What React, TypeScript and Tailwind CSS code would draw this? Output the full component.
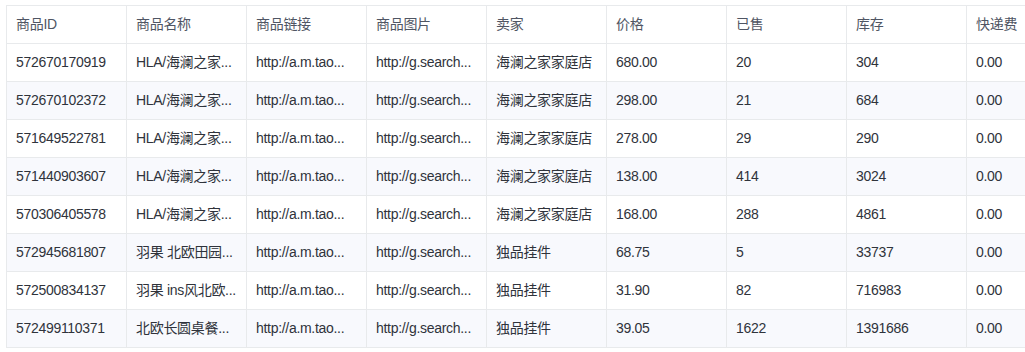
const columns = ["商品ID", "商品名称", "商品链接", "商品图片", "卖家", "价格", "已售", "库存", "快递费"];

const rows = [
  ["572670170919", "HLA/海澜之家...", "http://a.m.tao...", "http://g.search...", "海澜之家家庭店", "680.00", "20", "304", "0.00"],
  ["572670102372", "HLA/海澜之家...", "http://a.m.tao...", "http://g.search...", "海澜之家家庭店", "298.00", "21", "684", "0.00"],
  ["571649522781", "HLA/海澜之家...", "http://a.m.tao...", "http://g.search...", "海澜之家家庭店", "278.00", "29", "290", "0.00"],
  ["571440903607", "HLA/海澜之家...", "http://a.m.tao...", "http://g.search...", "海澜之家家庭店", "138.00", "414", "3024", "0.00"],
  ["570306405578", "HLA/海澜之家...", "http://a.m.tao...", "http://g.search...", "海澜之家家庭店", "168.00", "288", "4861", "0.00"],
  ["572945681807", "羽果 北欧田园...", "http://a.m.tao...", "http://g.search...", "独品挂件", "68.75", "5", "33737", "0.00"],
  ["572500834137", "羽果 ins风北欧...", "http://a.m.tao...", "http://g.search...", "独品挂件", "31.90", "82", "716983", "0.00"],
  ["572499110371", "北欧长圆桌餐...", "http://a.m.tao...", "http://g.search...", "独品挂件", "39.05", "1622", "1391686", "0.00"],
];

export default function App() {
  return (
    <div className="w-[1025px] h-[352px] overflow-hidden bg-white pt-[5px] pl-[6px] font-['Liberation_Sans','Noto_Sans_CJK_SC',sans-serif] text-[14px] tracking-[-0.3px]">
      <table className="table-fixed border-collapse w-[1081px]">
        <colgroup>
          {columns.map((c) => (
            <col key={c} className="w-[120px]" />
          ))}
        </colgroup>
        <thead>
          <tr>
            {columns.map((c) => (
              <th
                key={c}
                className="h-[38px] border border-[#e8eaec] pl-[9px] pr-[8px] text-left font-normal text-[#4f5563] whitespace-nowrap"
              >
                {c}
              </th>
            ))}
          </tr>
        </thead>
        <tbody>
          {rows.map((r, i) => (
            <tr key={r[0]} className={i % 2 === 1 ? "bg-[#f8f9fd]" : "bg-white"}>
              {r.map((cell, j) => (
                <td
                  key={j}
                  className="h-[38px] border border-[#e8eaec] pl-[9px] pr-[8px] text-[#2f333b] whitespace-nowrap"
                >
                  {cell}
                </td>
              ))}
            </tr>
          ))}
        </tbody>
      </table>
    </div>
  );
}
